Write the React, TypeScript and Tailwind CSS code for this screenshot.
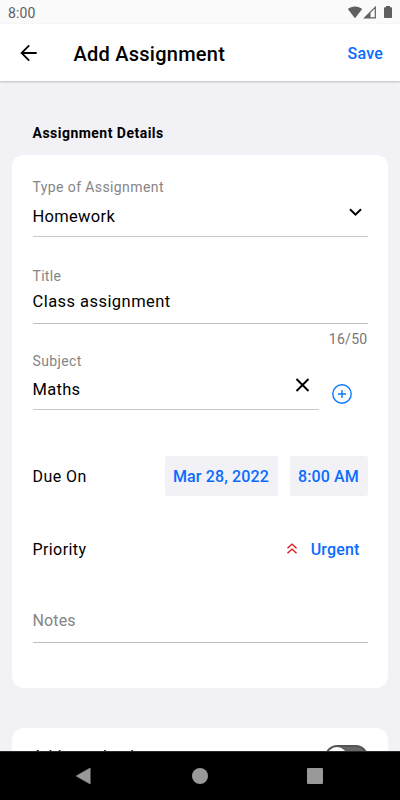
import React from 'react';

const StatusBar = () => {
    return (
        <div className="flex h-6 shrink-0 items-center justify-between bg-[#fafafa] pl-2 pr-[7px] text-[#5f5f5f]">
            <span className="pt-[2px] text-sm tracking-[0.1px]">8:00</span>
            <div className="flex items-center">
                <svg width="16" height="14" viewBox="0 0 16 14" fill="currentColor">
                    <path d="M8 13.3 0.8 4.1C2.8 2.5 5.3 1.6 8 1.6s5.2 0.9 7.2 2.5z" />
                </svg>
                <svg width="14" height="14" viewBox="0 0 14 14" fill="none">
                    <path d="M12.3 2.2v10.6H1.7z" stroke="currentColor" strokeWidth="1.2" />
                    <path d="M7.5 7v5.8H1.7z" fill="currentColor" />
                </svg>
                <svg className="ml-[6px]" width="10" height="14" viewBox="0 0 10 14" fill="currentColor">
                    <path d="M3 1h4v1.2h1.3q.7 0 .7.7v9.4q0 .7-.7.7H1.7q-.7 0-.7-.7V2.9q0-.7.7-.7H3z" />
                </svg>
            </div>
        </div>
    );
};

const Header = () => {
    return (
        <header className="z-10 flex h-[57px] shrink-0 items-center bg-white pt-px pr-[17px] pl-4 shadow-[0_1px_2px_rgba(0,0,0,0.22)]">
            <svg className="ml-[3px]" width="20" height="20" viewBox="0 0 20 20" fill="none" stroke="black" strokeWidth="1.8">
                <path d="M17.7 10H2.6M10.2 2.4 2.6 10l7.6 7.6" />
            </svg>
            <h1 className="ml-[34.5px] pt-px text-xl font-medium tracking-[0.25px] text-black">Add Assignment</h1>
            <button className="ml-auto pt-px text-base font-medium tracking-[0.2px] text-[#0a6cff]">Save</button>
        </header>
    );
};

const NavBar = () => {
    return (
        <nav className="flex h-[49px] shrink-0 items-center border-t border-[#2a2a2a] bg-black pl-[75px] text-[#999]">
            <svg width="18" height="18" viewBox="0 0 18 18" fill="currentColor">
                <path d="M1.2 9 15.2 1v16z" stroke="currentColor" strokeWidth="0.6" strokeLinejoin="round" />
            </svg>
            <span className="ml-[99px] size-[16px] rounded-full bg-[#999]" />
            <span className="ml-[99px] size-[16px] rounded-[1px] bg-[#999]" />
        </nav>
    );
};

const App = () => {
    return (
        <div className="flex h-[800px] w-[400px] flex-col overflow-hidden bg-[#f2f1f6] font-['Roboto',sans-serif] text-black">
            <StatusBar />
            <Header />
            <main className="flex min-h-0 flex-1 flex-col overflow-hidden px-3">
                <h2 className="mt-[42px] h-5 pl-[20.5px] text-sm leading-5 font-bold tracking-[0.48px]">Assignment Details</h2>

                <section className="mt-[11.5px] h-[533px] shrink-0 rounded-xl bg-white pt-[22.5px] pr-[20.5px] pl-[20.5px]">
                    <div className="h-[60px] border-b border-[#c5cccc]">
                        <p className="h-5 text-sm leading-5 tracking-[0.4px] text-[#858585]">Type of Assignment</p>
                        <div className="mt-[8px] flex items-start justify-between">
                            <span className="text-[16.5px] leading-6 tracking-[0.3px]">Homework</span>
                            <svg className="mr-[5px] mt-[2px]" width="15" height="10" viewBox="0 0 15 10" fill="none" stroke="black" strokeWidth="2">
                                <path d="M2 2.2 7.5 7.7 13 2.2" />
                            </svg>
                        </div>
                    </div>

                    <div className="mt-[29px] h-[58px] border-b border-[#c0c0c0]">
                        <p className="h-5 text-sm leading-5 tracking-[0.3px] text-[#858585]">Title</p>
                        <p className="mt-[4px] text-[16.5px] leading-6 tracking-[0.45px]">Class assignment</p>
                    </div>
                    <p className="mt-[5px] h-5 text-right text-sm leading-5 tracking-[0.3px] text-[#777]">16/50</p>

                    <div className="mt-[2px] flex">
                        <div className="h-[59px] w-[286px] border-b border-[#c8c8c8]">
                            <p className="h-5 text-sm leading-5 tracking-[0.38px] text-[#858585]">Subject</p>
                            <div className="mt-[7px] flex items-start justify-between">
                                <span className="text-[16.5px] leading-6 tracking-[0.3px]">Maths</span>
                                <svg className="mr-[9px]" width="15" height="15" viewBox="0 0 15 15" fill="none" stroke="black" strokeWidth="2">
                                    <path d="m1.5 1 12 12M13.5 1l-12 12" />
                                </svg>
                            </div>
                        </div>
                        <svg className="mt-[32px] ml-[12.5px]" width="22" height="22" viewBox="0 0 22 22" fill="none" stroke="#0a78ff" strokeWidth="1.4">
                            <circle cx="11" cy="11" r="9.2" />
                            <path d="M11 7v8M7 11h8" />
                        </svg>
                    </div>

                    <div className="mt-[46px] flex h-10 items-center text-base">
                        <span className="pt-px tracking-[0.45px]">Due On</span>
                        <button className="ml-auto h-10 w-[113px] rounded-[3px] bg-[#f2f1f6] pt-px font-medium tracking-[0.15px] whitespace-nowrap text-[#0a6cff]">
                            Mar 28, 2022
                        </button>
                        <button className="ml-3 h-10 w-[78px] rounded-[3px] bg-[#f2f1f6] pt-px font-medium tracking-[0.1px] whitespace-nowrap text-[#0a6cff]">
                            8:00 AM
                        </button>
                    </div>

                    <div className="mt-[33px] flex h-10 items-center text-base">
                        <span className="pt-[2px] tracking-[0.4px]">Priority</span>
                        <svg className="ml-auto" width="12" height="12" viewBox="0 0 12 12" fill="none" stroke="#d9161c" strokeWidth="1.4">
                            <path d="M1.5 5.3 6 1.1l4.5 4.2M1.5 10.3 6 6.1l4.5 4.2" />
                        </svg>
                        <span className="mr-2 ml-[13px] pt-[2px] font-medium tracking-[0.15px] text-[#0a6cff]">Urgent</span>
                    </div>

                    <div className="mt-[39px] h-[35px] border-b border-[#c0c0c0] pt-px text-base leading-6 tracking-[0.15px] text-[#858585]">
                        Notes
                    </div>
                </section>

                <section className="mt-[40.5px] flex h-20 shrink-0 justify-between rounded-xl bg-white pt-[17px] pr-[20.5px] pl-[20.5px]">
                    <span className="text-base leading-6 tracking-[0.3px]">Add to calendar</span>
                    <span className="flex h-6 w-[43px] rounded-full border-2 border-[#555] bg-[#666]">
                        <span className="size-5 rounded-full bg-white" />
                    </span>
                </section>
            </main>
            <NavBar />
        </div>
    );
};

export default App;
